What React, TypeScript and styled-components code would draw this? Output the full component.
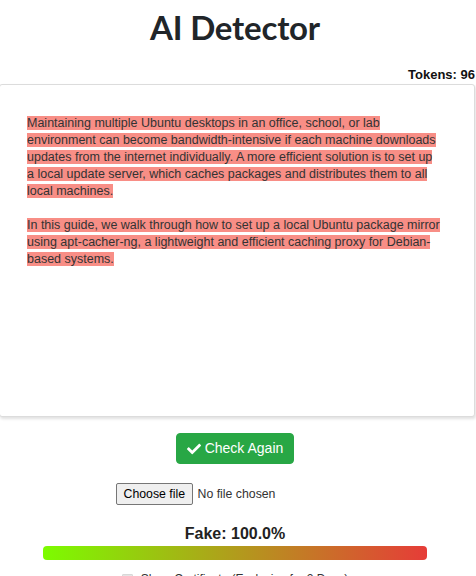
import React from "react";
import styled, { createGlobalStyle } from "styled-components";
import { FaCheck } from "react-icons/fa";

const Global = createGlobalStyle`
  html, body { margin: 0; padding: 0; background: #fff; overflow: hidden; }
  body { font-family: "Liberation Sans", Arial, sans-serif; color: #212529; }
`;

const Page = styled.div`
  width: 476px;
  display: flex;
  flex-direction: column;
`;

const Title = styled.h1`
  width: 470px;
  margin: 7px 0 0;
  text-align: center;
  font-family: Lato, "Liberation Sans", sans-serif;
  font-weight: 700;
  font-size: 33px;
  line-height: 40px;
  color: #212529;
  letter-spacing: -0.2px;
`;

const Tokens = styled.div`
  margin-top: 20px;
  text-align: right;
  padding-right: 1px;
  font-weight: 700;
  font-size: 13px;
  line-height: 15px;
  color: #111;
`;

const Editor = styled.div`
  margin: 2px 0 0 -1px;
  width: 476px;
  height: 333px;
  box-sizing: border-box;
  border: 1px solid #dcdcdc;
  border-radius: 3px;
  box-shadow: 1px 2px 3px rgba(0, 0, 0, 0.12);
  padding: 30px 33px 30px 27px;
  font-size: 12.5px;
  line-height: 17px;
  color: #333;
  background: #fff;
`;

const Paragraph = styled.p`
  margin: 0 0 17px;
`;

const Mark = styled.span`
  background: #f88e86;
`;

const Column = styled.div`
  width: 470px;
  display: flex;
  flex-direction: column;
  align-items: center;
`;

const CheckButton = styled.button`
  margin-top: 16px;
  display: inline-flex;
  align-items: center;
  gap: 4px;
  padding: 4px 10px;
  border: 1px solid #28a745;
  border-radius: 4px;
  background: #28a745;
  color: #fff;
  font-family: "Liberation Sans", Arial, sans-serif;
  font-size: 14px;
  line-height: 21px;
  cursor: pointer;
`;

const FilePicker = styled.label`
  margin-top: 19px;
  width: 238px;
  display: flex;
  align-items: center;
  gap: 5px;
  font-size: 12.3px;
  color: #333;
  cursor: pointer;
`;

const HiddenInput = styled.input`
  display: none;
`;

const ChooseButton = styled.span`
  box-sizing: border-box;
  height: 22px;
  padding: 0 6.5px;
  display: inline-flex;
  align-items: center;
  background: #efefef;
  border: 1px solid #767676;
  border-radius: 2px;
  color: #000;
`;

const Score = styled.div`
  margin-top: 20px;
  font-weight: 700;
  font-size: 16px;
  line-height: 18px;
  color: #222;
`;

const Bar = styled.div`
  margin-top: 3px;
  width: 384px;
  height: 14px;
  border-radius: 4px;
  background: linear-gradient(to right, #7cfc00, #e63c38);
`;

const CertRow = styled.label`
  margin-top: 12px;
  display: flex;
  align-items: flex-start;
  gap: 8px;
  font-size: 12px;
  line-height: 15px;
  color: #333;
`;

const Box = styled.span`
  margin-top: 2px;
  width: 9px;
  height: 9px;
  background: #e4e4e4;
  border: 1px solid #d8d8d8;
  border-radius: 1px;
`;

export default function App() {
  return (
    <Page>
      <Global />
      <Title>AI Detector</Title>
      <Tokens>Tokens: 96</Tokens>
      <Editor>
        <Paragraph>
          <Mark>
            Maintaining multiple Ubuntu desktops in an office, school, or lab environment can become
            bandwidth-intensive if each machine downloads updates from the internet individually. A
            more efficient solution is to set up a local update server, which caches packages and
            distributes them to all local machines.
          </Mark>
        </Paragraph>
        <Paragraph>
          <Mark>
            In this guide, we walk through how to set up a local Ubuntu package mirror using
            apt-cacher-ng, a lightweight and efficient caching proxy for Debian-based systems.
          </Mark>
        </Paragraph>
      </Editor>
      <Column>
        <CheckButton>
          <FaCheck size={14} />
          Check Again
        </CheckButton>
        <FilePicker>
          <HiddenInput type="file" />
          <ChooseButton>Choose file</ChooseButton>
          No file chosen
        </FilePicker>
        <Score>Fake: 100.0%</Score>
        <Bar />
        <CertRow>
          <Box />
          Show Certificate (Exclusive for 2 Days)
        </CertRow>
      </Column>
    </Page>
  );
}
